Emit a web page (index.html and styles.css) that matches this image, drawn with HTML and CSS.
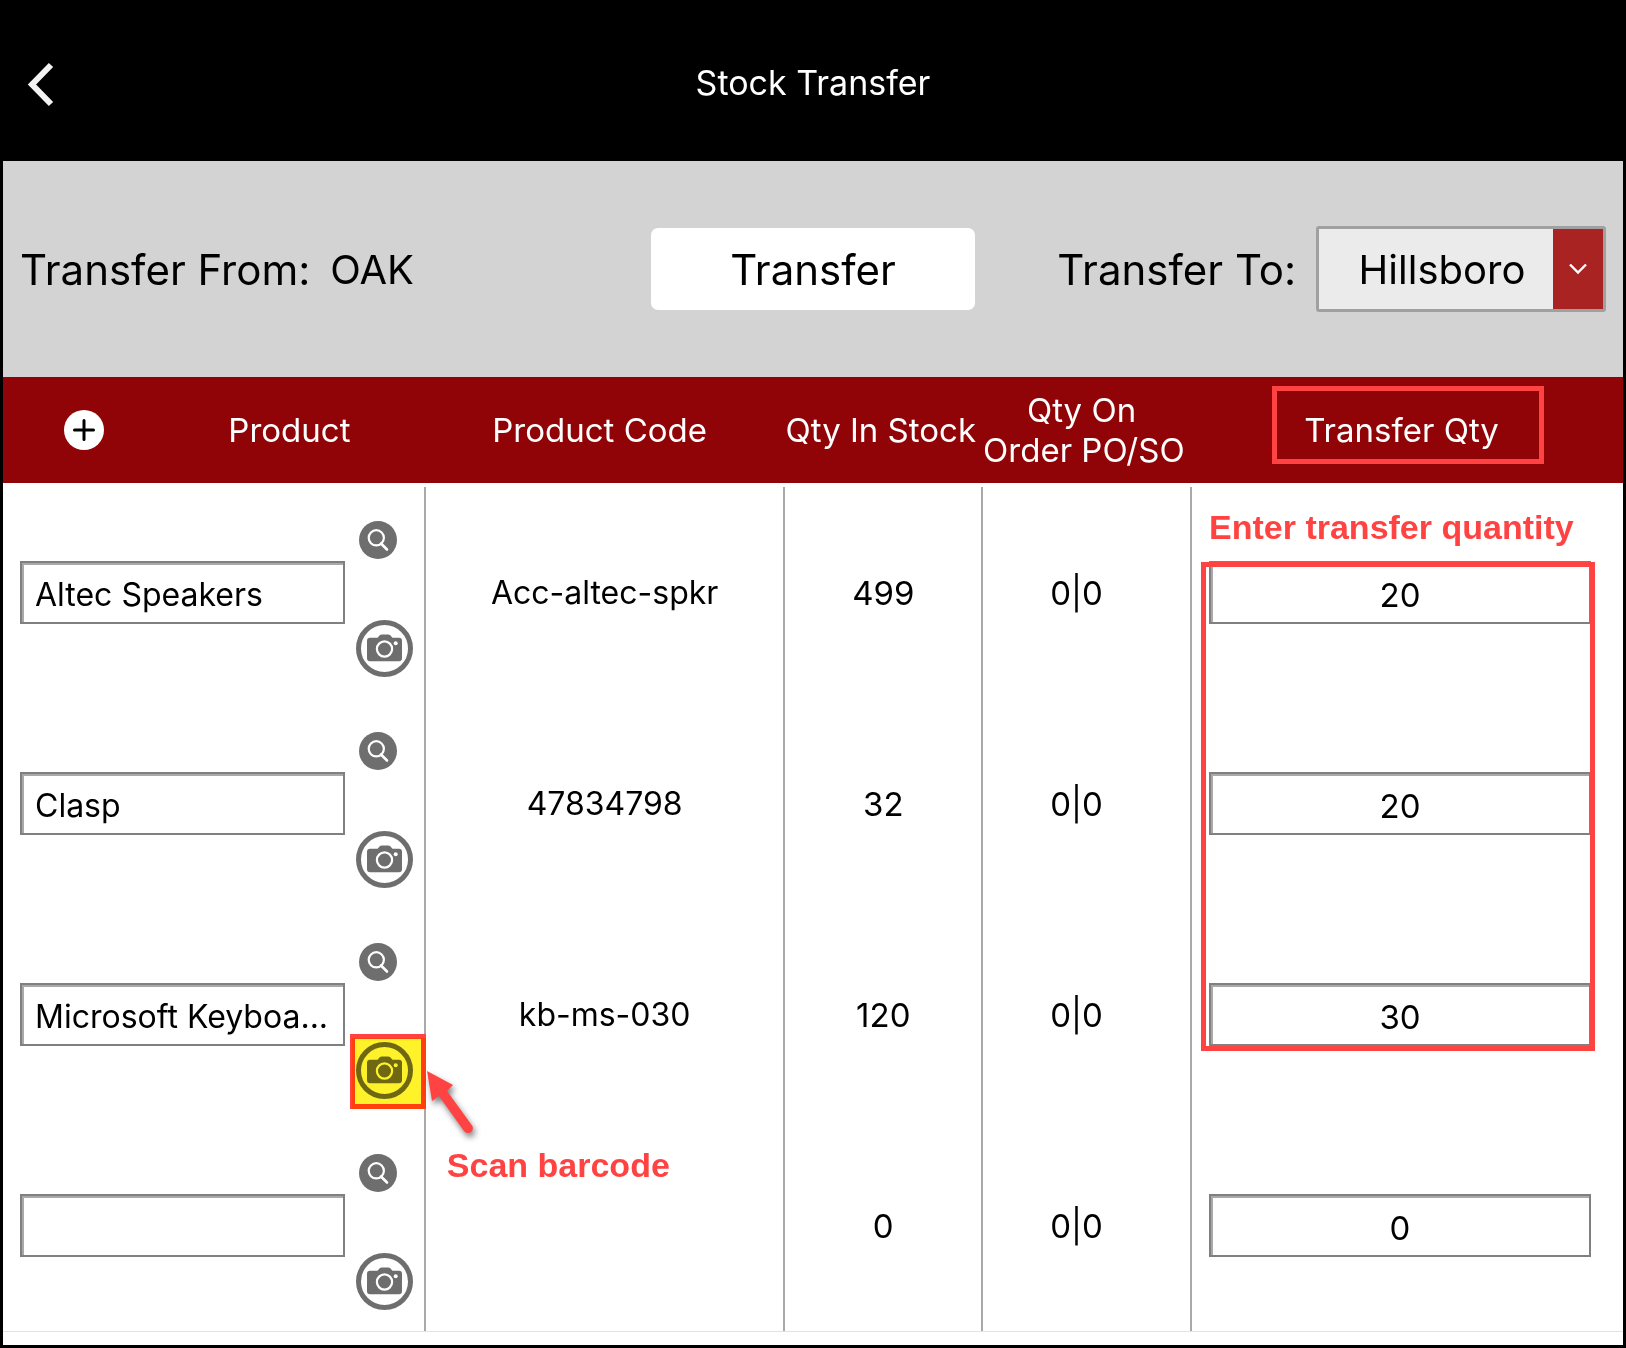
FILE: index.html
```html
<!DOCTYPE html>
<html lang="en">
<head>
    <meta charset="UTF-8">
    <meta name="viewport" content="width=device-width, initial-scale=1.0">
    <title>Stock Transfer</title>
    <link rel="stylesheet" href="styles.css">
</head>
<body>
    <!-- Shared icons -->
    <svg class="icon-defs" aria-hidden="true">
        <symbol id="icon-search" viewBox="0 0 38 38">
            <circle cx="19" cy="19" r="19" fill="#6e6e6e"/>
            <circle cx="17.3" cy="16.8" r="7.6" fill="none" stroke="#fff" stroke-width="2.2"/>
            <path d="M22 22.5l6 6" fill="none" stroke="#fff" stroke-width="2.6" stroke-linecap="round"/>
        </symbol>
        <symbol id="icon-camera" viewBox="0 0 57 57">
            <circle cx="28.5" cy="28.5" r="26" fill="none" stroke="#6e6e6e" stroke-width="5"/>
            <path d="M14 17.7h7.5l2-2.3q1-1 2.5-1h6q1.5 0 2.5 1l2 2.3h6.5q3 0 3 3v17.5q0 3-3 3h-29q-3 0-3-3v-17.5q0-3 3-3z" fill="#6e6e6e"/>
            <circle cx="28.5" cy="29" r="7.6" fill="none" stroke="#fff" stroke-width="2.2"/>
            <circle cx="39.7" cy="23.2" r="2" fill="#fff"/>
        </symbol>
    </svg>

    <header class="topbar">
        <button class="back" type="button" aria-label="Back">
            <svg width="28" height="46" viewBox="0 0 28 46"><path d="M24 3L5 22.500l19 19.500" fill="none" stroke="#f2f2f2" stroke-width="6"/></svg>
        </button>
        <h1>Stock Transfer</h1>
    </header>

    <form id="transferForm">
        <div class="toolbar">
            <div class="from">
                <span>Transfer From:</span>
                <span class="location">OAK</span>
            </div>
            <button class="transfer" type="submit">Transfer</button>
            <div class="to">
                <label for="transferTo">Transfer To:</label>
                <div class="select">
                    <select id="transferTo">
                        <option>Hillsboro</option>
                    </select>
                    <span class="select-arrow">
                        <svg width="18" height="12" viewBox="0 0 18 12"><path d="M1 1.5l8 8 8-8" fill="none" stroke="#fff" stroke-width="2.4"/></svg>
                    </span>
                </div>
            </div>
        </div>

        <table>
            <colgroup>
                <col class="col-product">
                <col class="col-code">
                <col class="col-stock">
                <col class="col-order">
                <col class="col-qty">
            </colgroup>
            <thead>
                <tr>
                    <th>
                        <div class="product-head">
                            <button class="add" type="button" aria-label="Add product">
                                <svg width="40" height="40" viewBox="0 0 40 40"><circle cx="20" cy="20" r="20" fill="#fff"/><path d="M20 10.5v19M10.5 20h19" stroke="#000" stroke-width="3" stroke-linecap="round"/></svg>
                            </button>
                            <span>Product</span>
                        </div>
                    </th>
                    <th>Product Code</th>
                    <th>Qty In Stock</th>
                    <th>Qty On<br>Order PO/SO</th>
                    <th>Transfer Qty<span class="callout callout-head"></span></th>
                </tr>
            </thead>
            <tbody>
                <tr>
                    <td>
                        <div class="product">
                            <input type="text" value="Altec Speakers" aria-label="Product">
                            <div class="actions">
                                <button class="search" type="button" aria-label="Search product"><svg><use href="#icon-search"/></svg></button>
                                <button class="scan" type="button" aria-label="Scan barcode"><svg><use href="#icon-camera"/></svg></button>
                            </div>
                        </div>
                    </td>
                    <td class="code">Acc-altec-spkr</td>
                    <td>499</td>
                    <td>0|0</td>
                    <td>
                        <input type="text" value="20" aria-label="Transfer quantity">
                        <span class="callout callout-qty"></span>
                        <span class="note note-qty">Enter transfer quantity</span>
                    </td>
                </tr>
                <tr>
                    <td>
                        <div class="product">
                            <input type="text" value="Clasp" aria-label="Product">
                            <div class="actions">
                                <button class="search" type="button" aria-label="Search product"><svg><use href="#icon-search"/></svg></button>
                                <button class="scan" type="button" aria-label="Scan barcode"><svg><use href="#icon-camera"/></svg></button>
                            </div>
                        </div>
                    </td>
                    <td class="code">47834798</td>
                    <td>32</td>
                    <td>0|0</td>
                    <td><input type="text" value="20" aria-label="Transfer quantity"></td>
                </tr>
                <tr>
                    <td>
                        <div class="product">
                            <input type="text" value="Microsoft Keyboa..." aria-label="Product">
                            <div class="actions">
                                <button class="search" type="button" aria-label="Search product"><svg><use href="#icon-search"/></svg></button>
                                <button class="scan" type="button" aria-label="Scan barcode"><svg><use href="#icon-camera"/></svg></button>
                            </div>
                        </div>
                        <span class="callout callout-scan"></span>
                        <span class="highlight"></span>
                    </td>
                    <td class="code">
                        kb-ms-030
                        <svg class="arrow" width="60" height="70" viewBox="0 0 60 70">
                            <path d="M1 1l26 14-6 6 25 34.500a4.800 4.800 0 0 1-8 5.500L13 26l-7 5z" fill="#ff4343"/>
                        </svg>
                        <span class="note note-scan">Scan barcode</span>
                    </td>
                    <td>120</td>
                    <td>0|0</td>
                    <td><input type="text" value="30" aria-label="Transfer quantity"></td>
                </tr>
                <tr>
                    <td>
                        <div class="product">
                            <input type="text" value="" aria-label="Product">
                            <div class="actions">
                                <button class="search" type="button" aria-label="Search product"><svg><use href="#icon-search"/></svg></button>
                                <button class="scan" type="button" aria-label="Scan barcode"><svg><use href="#icon-camera"/></svg></button>
                            </div>
                        </div>
                    </td>
                    <td class="code"></td>
                    <td>0</td>
                    <td>0|0</td>
                    <td><input type="text" value="0" aria-label="Transfer quantity"></td>
                </tr>
            </tbody>
        </table>
    </form>
</body>
</html>
```
FILE: styles.css
```css
* {
    box-sizing: border-box;
}
body {
    margin: 0;
    min-height: 100vh;
    border: 3px solid #000;
    background-color: #fff;
    color: #000;
    font-family: Inter, "Liberation Sans", sans-serif;
    font-size: 33px;
}
button, input, select {
    font-family: inherit;
    color: inherit;
}
button {
    padding: 0;
    border: none;
    background: none;
    cursor: pointer;
}
svg {
    display: block;
}
.icon-defs {
    position: absolute;
    width: 0;
    height: 0;
}

/* Top bar */
.topbar {
    display: grid;
    grid-template-columns: 1fr auto 1fr;
    align-items: center;
    height: 158px;
    padding: 0 24px;
    background-color: #000;
    color: #fff;
}
.back {
    justify-self: start;
    padding-top: 6px;
}
h1 {
    margin: 0;
    font-size: 34px;
    font-weight: 400;
}

/* Toolbar */
.toolbar {
    display: grid;
    grid-template-columns: 1fr 324px 1fr;
    align-items: center;
    height: 216px;
    padding: 0 17px;
    background-color: #d3d3d3;
    font-size: 42px;
}
.from, .to {
    display: flex;
    align-items: center;
    gap: 20px;
    white-space: nowrap;
}
.to {
    justify-content: flex-end;
}
.location {
    font-size: 40px;
}
.transfer {
    height: 82px;
    border-radius: 7px;
    background-color: #fff;
    font-size: 42px;
}
.select {
    position: relative;
    width: 290px;
    height: 86px;
    border: 3px solid #a0a0a0;
    border-radius: 3px;
}
.select select {
    width: 100%;
    height: 100%;
    padding: 0 50px 0 12px;
    border: none;
    appearance: none;
    background-color: #ebebeb;
    font-size: 40px;
    text-align: center;
    text-align-last: center;
}
.select-arrow {
    position: absolute;
    top: 0;
    right: 0;
    bottom: 0;
    display: flex;
    align-items: center;
    justify-content: center;
    width: 50px;
    background-color: #a92323;
    pointer-events: none;
}

/* Stock table */
table {
    width: 100%;
    table-layout: fixed;
    border-collapse: separate;
    border-spacing: 0;
    border-bottom: 1px solid #e3e3e3;
}
.col-product { width: 26.1%; }
.col-code { width: 22.2%; }
.col-stock { width: 12.2%; }
.col-order { width: 12.9%; }
.col-qty { width: 26.6%; }

th {
    position: relative;
    height: 110px;
    padding: 0 12px 0 0;
    border-bottom: 4px solid #fff;
    background-color: #900306;
    color: #fff;
    font-size: 33px;
    font-weight: 400;
    line-height: 40px;
    white-space: nowrap;
}
.product-head {
    display: grid;
    grid-template-columns: 162px 1fr;
    align-items: center;
    justify-items: center;
}
td {
    position: relative;
    height: 211px;
    padding: 0;
    border-right: 2px solid #a9a9a9;
    text-align: center;
}
td:nth-child(4) {
    padding-right: 20px;
}
td:last-child {
    padding: 0 32px 0 17px;
    border-right: none;
}
td input {
    display: block;
    width: 100%;
    height: 63px;
    padding: 4px 13px 0;
    border: 2px solid #808080;
    border-radius: 0;
    background-color: #fff;
    box-shadow: inset 2px 2px 0 #a9a9a9;
    font-size: 33px;
    text-align: center;
}
.code {
    font-size: 32px;
}
.product {
    display: flex;
    align-items: center;
    gap: 11px;
    height: 211px;
    padding: 0 11px 0 17px;
}
.product input {
    flex: 1;
    min-width: 0;
    padding-right: 0;
    font-size: 32px;
    text-align: left;
}
.actions {
    display: flex;
    flex-direction: column;
    align-self: flex-start;
    gap: 61px;
    padding-top: 34px;
}
.search {
    margin-left: 3px;
}
.search svg {
    width: 38px;
    height: 38px;
}
.scan svg {
    width: 57px;
    height: 57px;
}

/* Callouts drawn over the table */
.callout {
    position: absolute;
    z-index: 1;
    border: 5px solid #ff4343;
    pointer-events: none;
}
.callout-head {
    top: 9px;
    left: 80px;
    right: 79px;
    height: 78px;
}
.callout-qty {
    top: 75px;
    left: 9px;
    right: 28px;
    height: 489px;
}
.callout-scan {
    top: 125px;
    right: -2px;
    width: 76px;
    height: 75px;
}
.highlight {
    position: absolute;
    z-index: 2;
    top: 129px;
    right: -2px;
    width: 74px;
    height: 71px;
    background-color: #fff22b;
    mix-blend-mode: multiply;
    pointer-events: none;
}
.note {
    position: absolute;
    z-index: 1;
    color: #ff4343;
    font-family: "Liberation Sans", Arial, sans-serif;
    font-size: 34px;
    font-weight: 700;
    line-height: 40px;
    white-space: nowrap;
}
.note-qty {
    top: 20px;
    left: 17px;
}
.note-scan {
    top: 236px;
    left: 21px;
}
.arrow {
    position: absolute;
    z-index: 1;
    top: 161px;
    left: 0;
    overflow: visible;
    filter: drop-shadow(2px 4px 3px rgba(0, 0, 0, 0.5));
}
```
